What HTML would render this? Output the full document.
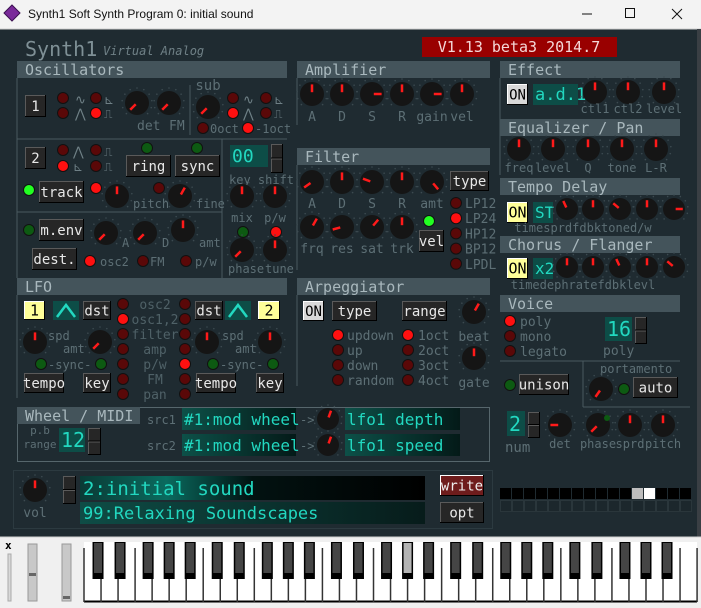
<!DOCTYPE html><html><head><meta charset="utf-8"><style>body{margin:0;background:#1f2b31;overflow:hidden}svg{display:block}</style></head><body>
<svg id="s" width="701" height="608" xmlns="http://www.w3.org/2000/svg" font-family="DejaVu Sans Mono, Liberation Mono, monospace"></svg>
<script>
const S=document.getElementById('s');let h='';
const R=(x,y,w,hh,f,st)=>h+=`<rect x="${x}" y="${y}" width="${w}" height="${hh}" fill="${f}"${st?` stroke="${st}"`:''}/>`;
const L=(x1,y1,x2,y2,c,w=1)=>h+=`<line x1="${x1}" y1="${y1}" x2="${x2}" y2="${y2}" stroke="${c}" stroke-width="${w}"/>`;
const T=(x,y,s,sz=12,f='#5d6f75',a='start',ex='')=>h+=`<text x="${x}" y="${y}" font-size="${sz}" fill="${f}" text-anchor="${a}" ${ex}>${s}</text>`;
const HD=(x,y,w,s)=>{R(x,y,w,17,'#44545b');T(x+8,y+14,s,15,'#a9b8bd')};
const B=(x,y,w,hh,s,st)=>{let f='#262626',tc='#e8e8e8';if(st=='w'){f='#d8d8d8';tc='#000'}if(st=='y'){f='#ffff99';tc='#000'}if(st=='r'){f='#6e1c1c';tc='#eee'}
R(x,y,w,hh,f);L(x,y+.5,x+w,y+.5,st?'#fff':'#5a5a5a');L(x+.5,y,x+.5,y+hh,st?'#fff':'#5a5a5a');L(x,y+hh-.5,x+w,y+hh-.5,'#000');L(x+w-.5,y,x+w-.5,y+hh,'#000');
T(x+w/2,y+hh/2+5,s,st=='y'&&s.length<3?15:14,tc,'middle')};
const D=(x,y,c)=>{const m={r:'#ff1010',d:'#5a0808',g:'#0d5a12',G:'#22ff22'};h+=`<circle cx="${x}" cy="${y}" r="5.5" fill="${m[c]}" stroke="#111"/>`};
const K=(x,y,a,r=12)=>{for(let i=0;i<11;i++){let t=(-135+i*27)*Math.PI/180;h+=`<circle cx="${x+Math.sin(t)*(r+3)}" cy="${y-Math.cos(t)*(r+3)}" r="0.8" fill="#3c4a50"/>`}
h+=`<circle cx="${x}" cy="${y}" r="${r}" fill="#151515"/>`;let t=a*Math.PI/180;L(x+Math.sin(t)*r*.15,y-Math.cos(t)*r*.15,x+Math.sin(t)*r*.8,y-Math.cos(t)*r*.8,'#ff1a1a',2.5)};
const BOX=(x,y,w,hh,s,sz=18)=>{R(x,y,w,hh,'#0d4d47');T(x+2,y+hh-5,s,sz,'#22d8c0')};
const SP=(x,y,w,hh)=>{B(x,y,w,hh/2,'');B(x,y+hh/2,w,hh/2,'')};
R(0,0,701,608,'#1f2b31');R(0,0,701,29,'#f3f3f3');L(0,29,701,29,'#cfcfcf');
h+=`<polygon points="12,5 20,13 12,21 4,13" fill="#7a2a9a" stroke="#3b1050"/>`;
T(28,18,'Synth1 Soft Synth Program 0: initial sound',12,'#111','start','font-family="Liberation Sans, sans-serif"');
L(582,14,592,14,'#111');R(625.5,8.5,9,9,'none','#111');L(672,9,682,19,'#111');L(682,9,672,19,'#111');
R(697,29,4,509,'#3a3f44');
T(25,56,'Synth1',20,'#7f9096');T(103,55,'Virtual Analog',12,'#6f8086','start','font-style="italic"');
R(422,37,195,20,'#990000');T(519,52,'V1.13 beta3 2014.7',15,'#f4d8d8','middle');
HD(17,61,270,'Oscillators');const ln='#4a5a60';
L(17,78,17,278,ln);L(17,139,287,139,ln);L(17,212,222,212,ln);L(222,139,222,278,ln);L(190,85,190,135,ln);
B(25,95,21,22,'1');D(63,98,'d');D(63,113,'d');D(96,98,'d');D(96,113,'r');
T(75,104,'∿',13,'#6f8086');T(75,118,'⋀',13,'#6f8086');T(104,104,'⊾',12,'#6f8086');T(104,118,'⎍',12,'#6f8086');
K(137,103,225);K(169,103,225);T(137,130,'det',13);T(169,130,'FM',13);
T(208,90,'sub',14,'#5d6f75','middle');K(208,107,225);D(233,98,'d');D(233,113,'r');D(266,98,'d');D(266,113,'d');
T(243,104,'∿',13,'#6f8086');T(243,118,'⋀',13,'#6f8086');T(274,104,'⊾',12,'#6f8086');T(274,118,'⎍',12,'#6f8086');
D(203,128,'d');T(210,133,'0oct');D(248,128,'r');T(255,133,'-1oct');
B(25,147,21,22,'2');D(63,150,'d');D(63,166,'r');D(96,150,'d');D(96,166,'d');
T(73,156,'⋀',13,'#6f8086');T(73,171,'⊾',12,'#6f8086');T(104,156,'⎍',12,'#6f8086');T(104,171,'⎍',12,'#6f8086');
D(147,148,'g');D(197,148,'g');B(126,155,45,22,'ring');B(175,155,45,22,'sync');
D(29,190,'G');B(39,181,45,22,'track');D(96,188,'r');K(117,196,0);D(159,188,'d');K(180,196,30);
T(133,208,'pitch');T(196,208,'fine');
BOX(230,145,38,22,'00');SP(271,144,12,29);T(229,184,'key shift');
K(242,196,0);K(275,196,0);T(242,222,'mix',12,'#5d6f75','middle');T(275,222,'p/w',12,'#5d6f75','middle');
D(29,230,'g');B(39,219,45,22,'m.env');K(106,233,225);K(145,233,225);K(183,230,0);T(122,247,'A');T(162,247,'D');T(199,247,'amt');
B(32,248,45,22,'dest.');D(90,261,'r');T(100,266,'osc2');D(143,261,'d');T(150,266,'FM');D(186,261,'d');T(195,266,'p/w');
D(243,232,'g');D(276,232,'r');K(242,250,225);K(275,250,0);T(228,273,'phase');T(265,273,'tune');
HD(297,61,193,'Amplifier');L(297,78,297,125,ln);
[[312,0,'A'],[342,0,'D'],[372,90,'S'],[402,0,'R'],[432,90,'gain'],[462,0,'vel']].forEach(k=>{K(k[0],94,k[1]);T(k[0],121,k[2],13,'#5d6f75','middle')});
HD(297,148,193,'Filter');L(297,165,297,270,ln);
[[312,235,'A'],[342,0,'D'],[372,290,'S'],[402,0,'R'],[432,140,'amt']].forEach(k=>{K(k[0],182,k[1]);T(k[0],208,k[2],13,'#5d6f75','middle')});
[[312,30,'frq'],[342,255,'res'],[372,40,'sat'],[402,0,'trk']].forEach(k=>{K(k[0],227,k[1]);T(k[0],253,k[2],13,'#5d6f75','middle')});
B(450,171,39,20,'type');D(429,221,'G');B(419,230,25,22,'vel');
['LP12','LP24','HP12','BP12','LPDL'].forEach((s,i)=>{D(456,203+i*15.2,i==1?'r':'d');T(465,208+i*15.2,s,13)});
HD(500,61,180,'Effect');L(500,78,500,175,ln);B(507,84,21,21,'ON','w');BOX(533,84,45,21,'a.d.1',17);
[[595,'ctl1'],[628,'ctl2'],[664,'level']].forEach(k=>{K(k[0],92,0);T(k[0],113,k[1],12,'#5d6f75','middle')});
HD(500,119,180,'Equalizer / Pan');
[[519,'freq'],[553,'level'],[588,'Q'],[622,'tone'],[656,'L-R']].forEach(k=>{K(k[0],149,0);T(k[0],172,k[1],12,'#5d6f75','middle')});
HD(500,178,180,'Tempo Delay');B(507,202,21,21,'ON','y');BOX(533,202,20,21,'ST',16);
[[567,335],[593,0],[620,310],[647,0],[674,90]].forEach(k=>K(k[0],209,k[1],11));
T(583,232,'timesprdfdbktoned/w',12,'#5d6f75','middle');
HD(500,236,180,'Chorus / Flanger');B(507,258,21,21,'ON','y');BOX(533,258,20,21,'x2',16);
[[567,0],[593,0],[620,335],[647,0],[674,310]].forEach(k=>K(k[0],267,k[1],11));
T(583,289,'timedephratefdbklevl',12,'#5d6f75','middle');
HD(500,295,180,'Voice');D(510,321,'r');D(510,336,'d');D(510,351,'d');T(520,326,'poly',13);T(520,341,'mono',13);T(520,356,'legato',13);
BOX(605,317,27,24,'16',20);SP(635,317,12,27);T(603,355,'poly',13);
L(500,361,680,361,ln);L(583,361,583,407,ln);L(583,407,690,407,ln);
T(600,373,'portamento',12);D(510,385,'g');B(519,374,50,21,'unison');K(601,389,215);D(624,389,'g');B(633,377,45,21,'auto');
BOX(507,411,18,25,'2',20);SP(528,412,12,26);T(505,452,'num',14);
K(560,425,270);K(598,425,225);h+=`<circle cx="607" cy="418" r="3" fill="#0d5a12"/>`;K(630,425,0);K(663,425,0);
T(560,448,'det',12,'#5d6f75','middle');T(598,448,'phase',12,'#5d6f75','middle');T(630,448,'sprd',12,'#5d6f75','middle');T(663,448,'pitch',12,'#5d6f75','middle');
HD(17,278,270,'LFO');L(17,295,17,398,ln);
B(24,301,21,19,'1','y');R(53,301,26,19,'#0d4d47');h+=`<polyline points="57,317 66,305 75,317" fill="none" stroke="#22d8c0" stroke-width="2.5"/>`;B(83,301,28,19,'dst');
['osc2','osc1,2','filter','amp','p/w','FM','pan'].forEach((s,i)=>{let y=304+i*15;D(123,y,i==1?'r':'d');D(185,y,i==4?'r':'d');T(155,y+5,s,13,'#4f6167','middle')});
B(195,301,28,19,'dst');R(225,301,26,19,'#0d4d47');h+=`<polyline points="229,317 238,305 247,317" fill="none" stroke="#22d8c0" stroke-width="2.5"/>`;B(258,301,22,19,'2','y');
K(35,342,0);K(100,342,225);T(48,340,'spd');T(63,353,'amt');D(41,364,'g');T(48,369,'-sync-');D(101,364,'g');
B(24,373,40,20,'tempo');B(83,373,28,20,'key');
K(207,342,0);K(270,342,0);T(222,340,'spd');T(235,353,'amt');D(213,364,'g');T(220,369,'-sync-');D(273,364,'g');
B(196,373,40,20,'tempo');B(256,373,28,20,'key');
HD(297,278,193,'Arpeggiator');L(297,295,297,386,ln);
B(303,301,21,20,'ON','w');B(332,301,45,20,'type');B(402,301,45,20,'range');K(474,312,30);T(474,341,'beat',13,'#5d6f75','middle');K(474,358,0);T(474,387,'gate',13,'#5d6f75','middle');
['updown','up','down','random'].forEach((s,i)=>{D(338,335+i*15,i?'d':'r');T(347,340+i*15,s,13)});
['1oct','2oct','3oct','4oct'].forEach((s,i)=>{D(408,335+i*15,i?'d':'r');T(418,340+i*15,s,13)});
R(17.5,407.5,472,54,'none','#56666c');HD(17,407,123,'Wheel / MIDI');
T(40,434,'p.b',11,'#5d6f75','middle');T(40,448,'range',11,'#5d6f75','middle');BOX(59,428,26,24,'12',20);SP(88,428,13,27);
h+=`<defs><linearGradient id="g1"><stop offset="0" stop-color="#0d5048"/><stop offset="1" stop-color="#041a18"/></linearGradient><linearGradient id="g2"><stop offset="0" stop-color="#0a3a35"/><stop offset=".25" stop-color="#0a6a5e"/><stop offset=".5" stop-color="#021211"/><stop offset="1" stop-color="#000"/></linearGradient></defs>`;
[[419,'src1','lfo1 depth'],[445,'src2','lfo1 speed']].forEach(r=>{T(147,r[0]+5,r[1],12);h+=`<rect x="182" y="${r[0]-11}" width="114" height="22" fill="url(#g1)"/><rect x="345" y="${r[0]-11}" width="115" height="22" fill="url(#g1)"/>`;
T(184,r[0]+6,'#1:mod wheel',16,'#22d8c0');T(300,r[0]+5,'-&gt;',12);K(328,r[0],20,11);T(347,r[0]+6,r[2],16,'#22d8c0')});
R(13.5,470.5,479,58,'none','#2c3a40');K(35,490,0);T(35,517,'vol',13,'#5d6f75','middle');SP(63,476,13,28);
h+=`<rect x="80" y="476" width="345" height="24" fill="url(#g2)"/><rect x="80" y="502" width="345" height="22" fill="url(#g1)" opacity=".9"/>`;
T(83,495,'2:initial sound',19,'#22d8c0');T(83,519,'99:Relaxing Soundscapes',17,'#22d8c0');
B(440,475,44,21,'write','r');B(440,502,44,21,'opt');
for(let i=0;i<16;i++){R(500+i*12,488,11,11,i==11?'#bdbdbd':i==12?'#fff':'#000');R(500.5+i*12,500.5,11,11,'#1c272c','#2a363b')}
R(0,537,701,71,'#f0f0f0');L(0,537,701,537,'#cfcfcf');
T(5,549,'x',11,'#000','start','font-weight="bold"');R(8,554,3,47,'#d8d8d8','#aaa');
R(28,544,9,57,'#c8c8c8','#999');R(29,573,7,3,'#666');R(62,544,9,57,'#c8c8c8','#999');R(63,596,7,3,'#666');
R(84,542,613,60,'#fff');L(84,601.5,697,601.5,'#000',2);
const kw=17.03;for(let i=0;i<=36;i++){L(84+i*kw,548,84+i*kw,602,'#333',1.5)}
const off={0:-3,1:2,3:-4,4:0,5:4};
for(let o=0;o<6;o++)for(const j of [0,1,3,4,5]){if(o*7+j>=35)continue;let cx=84+(o*7+j+1)*kw+off[j];let g=(o==2&&j==4);R(cx-5.5,542,11,37,'#000');R(cx-4,543,8,30,g?'#b4b4b4':'#454545')}
S.innerHTML=h;
</script></body></html>
